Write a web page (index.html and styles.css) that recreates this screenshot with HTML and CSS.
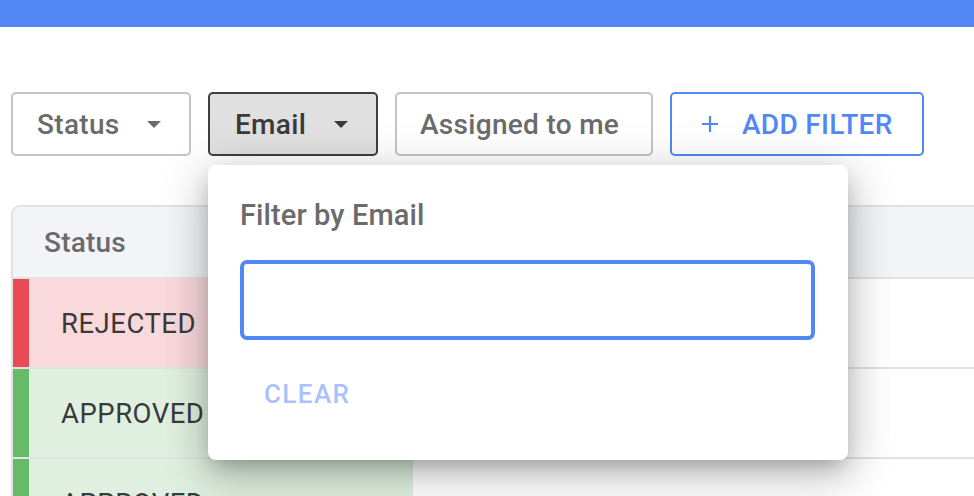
FILE: index.html
```html
<!DOCTYPE html>
<html>
<head>
<meta charset="utf-8">
<link rel="stylesheet" href="styles.css">
</head>
<body>
<div class="topbar"></div>
<div class="page">
  <div class="filters">
    <button class="fbtn w-status">Status
      <svg class="caret" width="14" height="7" viewBox="0 0 14 7"><path d="M0 0h14L7 7z"/></svg>
    </button>
    <button class="fbtn active w-email">Email
      <svg class="caret" width="14" height="7" viewBox="0 0 14 7"><path d="M0 0h14L7 7z"/></svg>
    </button>
    <button class="fbtn w-assigned">Assigned to me</button>
    <button class="fbtn add w-add">
      <svg class="plus" width="18" height="18" viewBox="0 0 18 18"><path d="M9 1v16M1 9h16" stroke="currentColor" stroke-width="2.2" fill="none"/></svg>
      ADD FILTER
    </button>
  </div>

  <div class="table">
    <div class="thead"><div class="th">Status</div></div>
    <div class="row rejected"><div class="ind"></div><div class="cell">REJECTED</div></div>
    <div class="row approved"><div class="ind"></div><div class="cell">APPROVED</div></div>
    <div class="row approved"><div class="ind"></div><div class="cell">APPROVED</div></div>
  </div>
</div>

<div class="popover">
  <div class="pop-title">Filter by Email</div>
  <div class="input"></div>
  <button class="clear">CLEAR</button>
</div>
</body>
</html>
```

FILE: styles.css
```css
* { box-sizing: border-box; }
html, body { margin: 0; padding: 0; }
body {
  width: 974px;
  height: 496px;
  overflow: hidden;
  background: #fff;
  font-family: Roboto, "Noto Sans", sans-serif;
  position: relative;
}
.topbar { height: 27px; background: #5288f5; }
.page { padding: 65px 0 0 11px; }
.filters { display: flex; gap: 17px; height: 64px; }
.fbtn {
  height: 64px;
  border: 2px solid #c4c4c4;
  border-radius: 5px;
  background: #fff;
  color: #6b6b6b;
  font-family: Roboto, sans-serif;
  font-weight: 500;
  font-size: 28px;
  letter-spacing: 0.3px;
  display: flex;
  align-items: center;
  justify-content: flex-start;
  padding: 0;
}
.caret { fill: currentColor; margin-left: 28px; }
.w-status { width: 180px; padding-left: 24px; }
.w-email { width: 170px; padding-left: 25px; }
.w-assigned { width: 258px; padding-left: 23px; }
.w-add { width: 254px; padding-left: 29px; }
.fbtn.active { background: #e0e0e0; border-color: #3f3f3f; color: #3a3a3a; }
.fbtn.add { border-color: #5288f5; color: #5288f5; }
.plus { margin-right: 23px; }

.table {
  margin-top: 49px;
  width: 1100px;
  border-left: 2px solid #e2e2e2;
  border-top: 2px solid #e2e2e2;
  border-top-left-radius: 9px;
  overflow: hidden;
}
.thead {
  height: 72px;
  background: #f3f4f8;
  border-bottom: 2px solid #e2e2e2;
  display: flex;
  align-items: center;
  padding-left: 31px;
}
.th { color: #6b6b6b; font-size: 28px; font-weight: 500; letter-spacing: 0.2px; }
.row { display: flex; height: 90px; border-bottom: 2px solid #e2e2e2; }
.ind { width: 16px; }
.cell {
  width: 384px;
  display: flex;
  align-items: center;
  padding-left: 32px;
  color: #3a3a3a;
  font-size: 27.5px;
  letter-spacing: 0.5px;
}
.rejected .ind { background: #ea4a55; }
.rejected .cell { background: #f9d9dc; }
.approved .ind { background: #66bb6a; }
.approved .cell { background: #e0f0e0; }

.popover {
  position: absolute;
  left: 208px;
  top: 165px;
  width: 640px;
  height: 295px;
  background: #fff;
  border-radius: 8px;
  box-shadow: 0 10px 20px -6px rgba(0,0,0,0.25), 0 16px 40px 4px rgba(0,0,0,0.14), 0 6px 48px 8px rgba(0,0,0,0.10);
  padding: 34px 32px 0 32px;
}
.pop-title { color: #6b6b6b; font-size: 29px; font-weight: 500; line-height: 32px; letter-spacing: 0.1px; }
.input {
  margin-top: 29px;
  height: 80px;
  width: 575px;
  border: 4px solid #5288f5;
  border-radius: 7px;
}
.clear {
  margin-top: 30px;
  margin-left: 0;
  padding: 0 24px;
  height: 48px;
  border: 0;
  background: transparent;
  color: #a9c3fa;
  font-family: Roboto, sans-serif;
  font-weight: 500;
  font-size: 26px;
  letter-spacing: 1.4px;
}
```
